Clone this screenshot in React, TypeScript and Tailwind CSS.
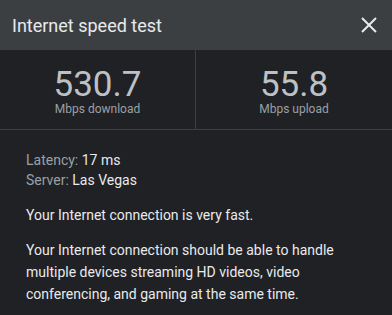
import React from 'react';

export default function App() {
  return (
    <div className="w-[392px] h-[315px] bg-[#202124] font-['Roboto',sans-serif] overflow-hidden">
      <header className="h-[50px] bg-[#3c3f42] flex items-center justify-between pl-3 pr-[11px]">
        <h1 className="text-[18px] text-[#e8eaed]">Internet speed test</h1>
        <svg width="24" height="24" viewBox="0 0 24 24" className="text-[#e8eaed]">
          <path d="M5 5 L19 19 M19 5 L5 19" stroke="currentColor" strokeWidth="2" />
        </svg>
      </header>

      <div className="grid grid-cols-2 h-[80px] border-b border-[#3c4043]">
        <div className="flex flex-col items-center pt-[17px] border-r border-[#3c4043]">
          <div className="text-[35px] leading-[35px] text-[#bdc1c6]">530.7</div>
          <div className="text-[12px] leading-[14px] text-[#9aa0a6]">Mbps download</div>
        </div>
        <div className="flex flex-col items-center pt-[17px]">
          <div className="text-[35px] leading-[35px] text-[#bdc1c6]">55.8</div>
          <div className="text-[12px] leading-[14px] text-[#9aa0a6]">Mbps upload</div>
        </div>
      </div>

      <div className="px-[26px] pt-[20px] text-[14px] text-[#e8eaed]">
        <div className="leading-[20px]">
          <div><span className="text-[#9aa0a6]">Latency:</span> 17 ms</div>
          <div><span className="text-[#9aa0a6]">Server:</span> Las Vegas</div>
        </div>
        <p className="mt-[14px] leading-[22px]">Your Internet connection is very fast.</p>
        <p className="mt-[13px] leading-[22px]">
          Your Internet connection should be able to handle multiple devices streaming HD videos, video conferencing, and gaming at the same time.
        </p>
      </div>
    </div>
  );
}
